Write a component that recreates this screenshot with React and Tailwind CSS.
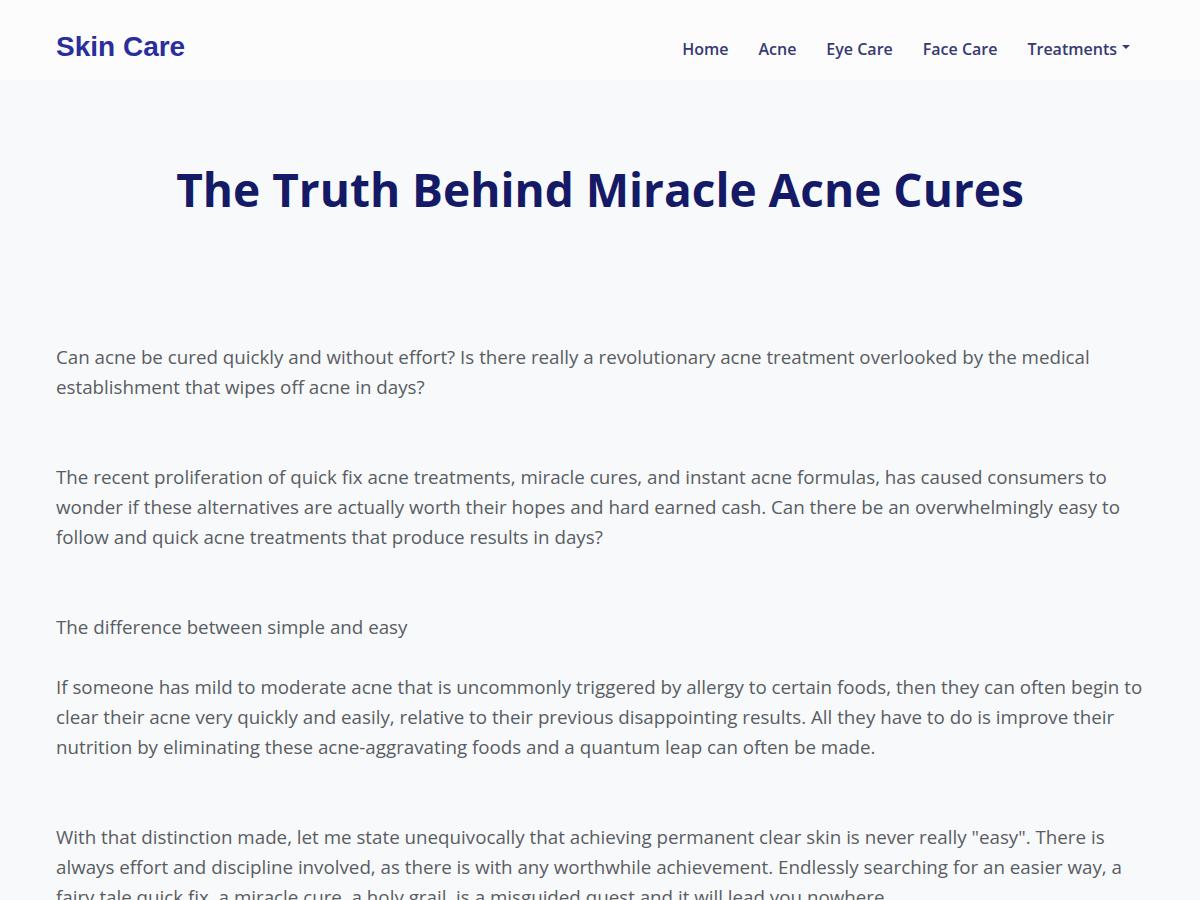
export default function App() {
  const links = ["Home", "Acne", "Eye Care", "Face Care"];

  return (
    <div className="min-h-screen bg-[#f8f9fa] font-['Open_Sans',sans-serif]">
      {/* NAVBAR */}
      <header className="bg-[#fcfcfd]">
        <div className="px-14 h-[80px] pt-[14px] flex items-center justify-between">
          <a className="font-['Liberation_Sans',Arial,sans-serif] font-bold text-[28px] text-[#2a2d9c]">
            Skin Care
          </a>

          <nav className="flex items-center gap-[30px] text-[16px] font-semibold text-[#363a72] mr-[14px] pt-[4px]">
            {links.map((l) => (
              <a key={l}>{l}</a>
            ))}
            <a className="flex items-center gap-[5px]">
              Treatments
              <span className="inline-block w-0 h-0 border-l-[4px] border-r-[4px] border-t-[4px] border-l-transparent border-r-transparent border-t-[#363a72] -mt-1" />
            </a>
          </nav>
        </div>
      </header>

      {/* ARTICLE */}
      <main className="px-14">
        <h1 className="text-center font-bold text-[46px] text-[#141a66] mt-[82px] mb-[125px] leading-[1.2]">
          The Truth Behind Miracle Acne Cures
        </h1>

        <div className="text-[18.75px] leading-[30px] text-[#585d63]">
          <p className="mb-[60px]">
            Can acne be cured quickly and without effort? Is there really a
            revolutionary acne treatment overlooked by the medical
            establishment that wipes off acne in days?
          </p>

          <p className="mb-[60px]">
            The recent proliferation of quick fix acne treatments, miracle
            cures, and instant acne formulas, has caused consumers to wonder if
            these alternatives are actually worth their hopes and hard earned
            cash. Can there be an overwhelmingly easy to follow and quick acne
            treatments that produce results in days?
          </p>

          <p className="mb-[30px]">The difference between simple and easy</p>

          <p className="mb-[60px]">
            If someone has mild to moderate acne that is uncommonly triggered
            by allergy to certain foods, then they can often begin to clear
            their acne very quickly and easily, relative to their previous
            disappointing results. All they have to do is improve their
            nutrition by eliminating these acne-aggravating foods and a quantum
            leap can often be made.
          </p>

          <p className="mb-[60px]">
            With that distinction made, let me state unequivocally that
            achieving permanent clear skin is never really "easy". There is
            always effort and discipline involved, as there is with any
            worthwhile achievement. Endlessly searching for an easier way, a
            fairy tale quick fix, a miracle cure, a holy grail, is a misguided
            quest and it will lead you nowhere.
          </p>
        </div>
      </main>
    </div>
  );
}
